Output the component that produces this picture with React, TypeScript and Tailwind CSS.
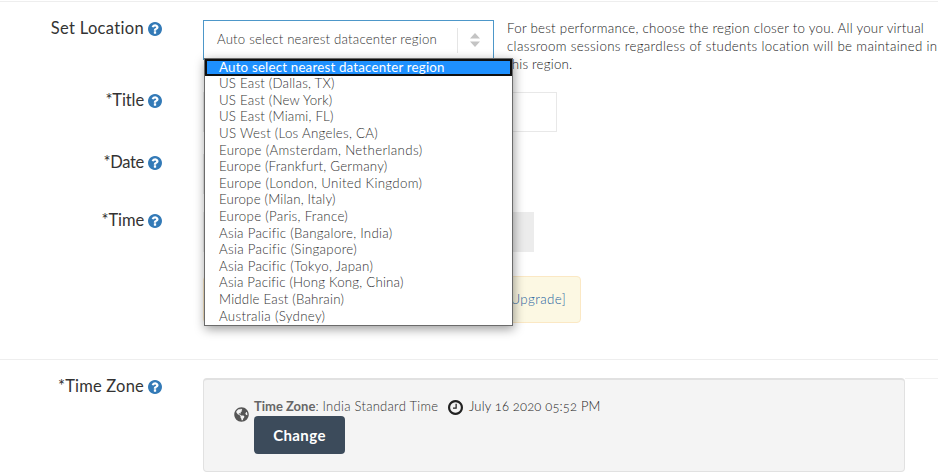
import { FaGlobeAmericas } from 'react-icons/fa';

const regions = [
  { name: 'Auto select nearest datacenter region', tracking: 'tracking-[0.2px]' },
  { name: 'US East (Dallas, TX)', tracking: 'tracking-[0.2px]' },
  { name: 'US East (New York)', tracking: 'tracking-[0.2px]' },
  { name: 'US East (Miami, FL)', tracking: 'tracking-[0.2px]' },
  { name: 'US West (Los Angeles, CA)', tracking: 'tracking-[0.27px]' },
  { name: 'Europe (Amsterdam, Netherlands)', tracking: 'tracking-[0.35px]' },
  { name: 'Europe (Frankfurt, Germany)', tracking: 'tracking-[0.23px]' },
  { name: 'Europe (London, United Kingdom)', tracking: 'tracking-[0.32px]' },
  { name: 'Europe (Milan, Italy)', tracking: 'tracking-[0.18px]' },
  { name: 'Europe (Paris, France)', tracking: 'tracking-[0.28px]' },
  { name: 'Asia Pacific (Bangalore, India)', tracking: 'tracking-[0.26px]' },
  { name: 'Asia Pacific (Singapore)', tracking: 'tracking-[0.29px]' },
  { name: 'Asia Pacific (Tokyo, Japan)', tracking: 'tracking-[0.26px]' },
  { name: 'Asia Pacific (Hong Kong, China)', tracking: 'tracking-[0.2px]' },
  { name: 'Middle East (Bahrain)', tracking: 'tracking-[0.2px]' },
  { name: 'Australia (Sydney)', tracking: 'tracking-[0.3px]' },
];

const HelpIcon = () => (
  <svg viewBox="0 0 1536 1536" className="w-3.5 h-3.5 shrink-0 fill-[#337ab7]">
    <path d="M896 1248v-192q0-14-9-23t-23-9H672q-14 0-23 9t-9 23v192q0 14 9 23t23 9h192q14 0 23-9t9-23zm256-672q0-88-55.5-163T958 297t-170-41q-243 0-371 213-15 24 8 42l132 100q7 6 19 6 16 0 25-12 53-68 86-92 34-24 86-24 48 0 85.5 26t37.5 59q0 38-20 61t-68 45q-63 28-115.5 86.5T640 892v36q0 14 9 23t23 9h192q14 0 23-9t9-23q0-19 21.5-49.5T972 829q32-18 49-28.5t46-35 44.5-48 28-60.5 12.5-81zm384 192q0 209-103 385.5T1153.5 1433 768 1536t-385.5-103T103 1153.5 0 768t103-385.5T382.5 103 768 0t385.5 103T1433 382.5 1536 768z" />
  </svg>
);

const ClockIcon = () => (
  <svg viewBox="0 0 1536 1536" className="w-[15px] h-[15px] shrink-0 fill-[#222]">
    <path d="M896 416v448q0 14-9 23t-23 9H544q-14 0-23-9t-9-23v-64q0-14 9-23t23-9h224V416q0-14 9-23t23-9h64q14 0 23 9t9 23zm416 352q0-148-73-273t-198-198-273-73-273 73-198 198-73 273 73 273 198 198 273 73 273-73 198-198 73-273zm224 0q0 209-103 385.5T1153.5 1433 768 1536t-385.5-103T103 1153.5 0 768t103-385.5T382.5 103 768 0t385.5 103T1433 382.5 1536 768z" />
  </svg>
);

const Label = ({ text, tracking }: { text: string; tracking: string }) => (
  <div className="w-[203px] pr-[41px] shrink-0 h-[17px] flex items-center justify-end gap-1">
    <span className={`text-[16.5px] leading-[17px] text-[#333] whitespace-nowrap ${tracking}`}>{text}</span>
    <HelpIcon />
  </div>
);

const RegionMenu = () => (
  <ul className="absolute left-0 top-[37px] z-10 w-[309px] h-[268px] bg-white border border-[#6b6b6b] shadow-[1px_3px_10px_rgba(0,0,0,0.4)]">
    {regions.map((region, index) => (
      <li
        key={region.name}
        className={`flex items-center text-[13.3px] leading-4 whitespace-nowrap ${
          index === 0
            ? 'h-[17px] bg-[#1e90ff] text-white border-2 border-[#101010] pl-3'
            : 'h-[16.6px] text-[#333] pl-3.5'
        }`}
      >
        <span className={`-mt-[2px] ${index === 0 ? 'font-normal' : 'font-light'} ${region.tracking}`}>{region.name}</span>
      </li>
    ))}
  </ul>
);

const App = () => {
  return (
    <div className="w-[941px] h-[472px] overflow-hidden bg-white font-['Lato',sans-serif]">
      <div className="w-[938px] h-[472px] pt-px overflow-hidden">
        <div className="h-px bg-[#eee]" />

        {/* Location */}
        <div className="flex h-[90px] pt-[18px]">
          <Label text="Set Location" tracking="tracking-[0.33px]" />
          <div className="relative w-[291px] h-10 shrink-0 border border-[#4d97c9] flex items-center pl-[13px]">
            <span className="grow text-[13.2px] font-light text-[#333] whitespace-nowrap tracking-[0.2px]">
              Auto select nearest datacenter region
            </span>
            <div className="w-px h-[25px] bg-[#e5e5e5]" />
            <svg viewBox="0 0 10 14" className="w-2.5 h-3.5 ml-3 mr-[13px] shrink-0 fill-[#c4c4c4]">
              <path d="M5 0l5 5.5H0zM5 14l5-5.500H0z" />
            </svg>
            <RegionMenu />
          </div>
          <p className="-mt-px pl-[13px] text-[13.3px] font-light leading-[18px] text-[#222] whitespace-nowrap">
            <span className="block tracking-[0.26px]">For best performance, choose the region closer to you. All your virtual</span>
            <span className="block tracking-[0.34px]">classroom sessions regardless of students location will be maintained in</span>
            <span className="block tracking-[0.2px]">this region.</span>
          </p>
        </div>

        {/* Title */}
        <div className="flex h-[62px]">
          <Label text="*Title" tracking="tracking-[-0.1px]" />
          <div className="w-[354px] h-10 border border-[#e8e8e8]" />
        </div>

        {/* Date */}
        <div className="flex h-[58px]">
          <Label text="*Date" tracking="tracking-[-0.3px]" />
          <div className="w-[200px] h-10 border border-[#e8e8e8]" />
        </div>

        {/* Time */}
        <div className="flex h-16">
          <Label text="*Time" tracking="tracking-[-0.1px]" />
          <div className="w-[331px] h-10 bg-[#ececec]" />
        </div>

        {/* Upgrade notice */}
        <div className="h-[83px] pl-[203px]">
          <div className="w-[378px] h-[47px] rounded border border-[#fbe8c4] bg-[#fcf8e3] flex items-center justify-end pr-3.5">
            <span className="text-[13.3px] font-light text-[#1f62a0] tracking-[0.4px]">Upgrade]</span>
          </div>
        </div>
        <div className="h-px bg-[#eee]" />

        {/* Time zone */}
        <div className="flex pt-[18px]">
          <Label text="*Time Zone" tracking="tracking-[0.2px]" />
          <div className="w-[702px] h-[94px] shrink-0 rounded border border-t-2 border-[#e1e1e1] bg-[#f4f4f4] flex pl-[30px] pt-[18px]">
            <FaGlobeAmericas className="w-[15px] h-[15px] mt-[9px] shrink-0 text-[#555]" />
            <div className="pl-[5px]">
              <div className="flex items-center h-[18px] text-[13px] font-light whitespace-nowrap text-[#333]">
                <span className="w-[194px]">
                  <b className="font-bold text-[#666] tracking-[0px]">Time Zone</b>
                  <span className="tracking-[0.27px]">: India Standard Time</span>
                </span>
                <ClockIcon />
                <span className="pl-1.5 text-[#222] oldstyle-nums tracking-[0.16px]">July 16 2020 05:52 PM</span>
              </div>
              <button className="w-[91px] h-[38px] rounded bg-[#3c4b5b] text-white text-[15px] font-bold tracking-[0.4px]">
                Change
              </button>
            </div>
          </div>
          <div className="grow h-px bg-[#f1f1f1]" />
        </div>
      </div>
    </div>
  );
};

export default App;
